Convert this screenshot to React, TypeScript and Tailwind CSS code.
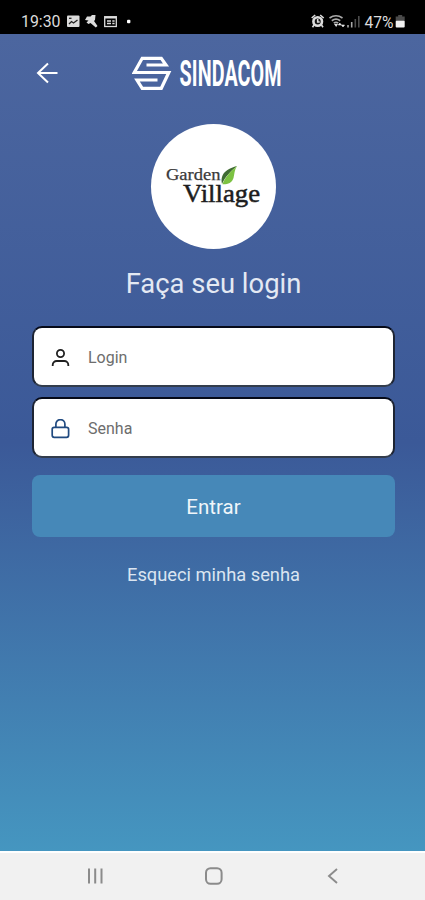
import type { ReactNode } from "react";

function StatusBar() {
  return (
    <div className="flex h-[34px] shrink-0 items-center bg-black pl-[21px] pr-[19px] pt-[9px] text-[#dcdcdc]">
      <svg className="h-[20px] w-[115px]" viewBox="0 0 115 20">
        <text x="0" y="15" fontSize="16" textLength="39.500" lengthAdjust="spacingAndGlyphs" fill="currentColor">19:30</text>
        {/* gallery */}
        <rect x="46" y="3.500" width="12.500" height="11.500" rx="1" fill="currentColor" />
        <path d="M48 12l2.500-2.500 2 1.500 4-3" stroke="#222" strokeWidth="1.300" fill="none" />
        <path d="M48 6.300h2.500" stroke="#222" strokeWidth="1.300" />
        {/* wrench */}
        <path d="M64 8l2-3.500h3.500L71 3h3.500l-.5 5-1 1 3.500 5-1.700 1.500L69.500 11l-2 1-2-1.500 2-2z" fill="currentColor" />
        {/* news card */}
        <rect x="83.700" y="4.700" width="11.600" height="9.800" fill="none" stroke="currentColor" strokeWidth="1.300" />
        <path d="M84 5.700h11M86 9h4M86 11.500h4M91.300 9h2.300M91.300 11.500h2.300" stroke="currentColor" strokeWidth="1.500" />
        <rect x="106" y="7.800" width="3.400" height="3.400" rx="1" fill="#fff" />
      </svg>

      <svg className="ml-auto h-[20px] w-[95px]" viewBox="0 0 95 20">
        {/* alarm */}
        <circle cx="6.700" cy="9.500" r="4.300" fill="#111" stroke="currentColor" strokeWidth="2.600" />
        <path d="M.7 6l3.500-3M12.700 6l-3.500-3M3 13l-1.500 2.200M10.500 13l1.500 2.200M6.700 7v3h2" stroke="currentColor" strokeWidth="1.600" fill="none" />
        {/* wifi */}
        <path d="M18.500 6q6.500-4.500 13 0M20.800 8.700q4.200-3.200 8.400 0M22.800 11.200q2.200-1.800 4.400 0" stroke="#aaa" strokeWidth="1.700" fill="none" />
        <path d="M23 12h4l-1.800 3z" fill="#ddd" />
        <path d="M28.800 11l-1.500 2h3zM32 15l-1.500-2h3z" fill="#eee" stroke="#eee" strokeWidth=".6" />
        {/* signal */}
        <path d="M37 13v2.500M40.700 10v5.500" stroke="#aaa" strokeWidth="1.600" />
        <path d="M44.300 7v8.500M47.800 4v11.500" stroke="#4d4d4d" strokeWidth="1.600" />
        <text x="53.500" y="15.500" fontSize="16" textLength="29" lengthAdjust="spacingAndGlyphs" fill="currentColor">47%</text>
        {/* battery */}
        <path d="M87.200 3h4v1.500h2.500v5h-9v-5h2.500z" fill="#4a4a4a" />
        <rect x="84.700" y="8.700" width="9" height="6.800" rx="1" fill="#f1f1f1" />
      </svg>
    </div>
  );
}

function Brand() {
  return (
    <svg className="h-[50px] w-[160px]" viewBox="0 -6 160 50" fill="none">
      <path
        d="M14.500 11H34L29.300 4.300H10.200L2.300 18.500H36.800L29.300 34.300H10.200L5 26H25.500"
        stroke="#fff"
        strokeWidth="3.200"
      />
      <text
        x="0"
        y="0"
        transform="translate(47.500 32.300) scale(.580 1.080)"
        className="font-[Roboto,sans-serif] font-bold"
        fontSize="34"
        textLength="176"
        lengthAdjust="spacing"
        fill="#fff"
      >
        SINDACOM
      </text>
    </svg>
  );
}

function GardenLogo() {
  return (
    <div className="flex size-[125px] items-center justify-center rounded-full bg-white">
      <svg className="h-[50px] w-[100px] font-['Liberation_Serif',serif]" viewBox="0 0 100 50">
        <text x="2" y="18" fontSize="16.500" textLength="54.500" lengthAdjust="spacingAndGlyphs" fill="#3a3a3a" stroke="#3a3a3a" strokeWidth=".25">Garden</text>
        <text x="19" y="39.700" fontSize="25.500" textLength="77" lengthAdjust="spacingAndGlyphs" fill="#1d1d1d" stroke="#1d1d1d" strokeWidth=".5">Village</text>
        <path d="M73 4C66 6 59.500 9 58 15c-.7 2.500-.5 4.500 0 7C61 15 66 10 73 4z" fill="#3f6b32" />
        <path d="M73 4C66 10 61 15 58.500 22.300c5 .3 9.500-1.300 11-6.300 1-4 .8-8 3.500-12z" fill="#7cc242" />
      </svg>
    </div>
  );
}

interface FieldProps {
  type: string;
  placeholder: string;
  icon: ReactNode;
}

function Field({ type, placeholder, icon }: FieldProps) {
  return (
    <label className="flex h-[61px] items-center gap-[17px] rounded-[10px] border-2 border-t-[#060a18] border-x-[#1d2433] border-b-[#333d4c] bg-white pl-[17px] pt-[2px]">
      {icon}
      <input
        type={type}
        placeholder={placeholder}
        className="w-[280px] bg-transparent text-[16px] text-gray-700 outline-none placeholder:text-[#6d6d6d]"
      />
    </label>
  );
}

const userIcon = (
  <svg className="size-[20px]" viewBox="0 0 20 20" fill="none" stroke="#202020" strokeWidth="1.800">
    <circle cx="9.500" cy="5.500" r="3.600" />
    <path d="M1.700 18v-1a4 4 0 0 1 4-4h7.600a4 4 0 0 1 4 4v1" />
  </svg>
);

const lockIcon = (
  <svg className="size-[20px]" viewBox="0 0 20 20" fill="none" stroke="#204a80" strokeWidth="1.700">
    <rect x="1.200" y="8.300" width="16.400" height="10" rx="2" />
    <path d="M4.900 8.300V5.100a4.500 4.500 0 0 1 9 0v3.200" />
  </svg>
);

function NavBar() {
  return (
    <div className="flex h-[49px] shrink-0 items-center justify-between border-t-2 border-white bg-[#f1f1f1] pl-[86px] pr-[83px] pb-[1px] text-[#8b8b8b]">
      <svg className="size-[18px]" viewBox="0 0 18 18" stroke="currentColor" strokeWidth="2">
        <path d="M3 1.500v15M9.200 1.500v15M15.500 1.500v15" />
      </svg>
      <svg className="size-[18px]" viewBox="0 0 18 18" fill="none" stroke="currentColor" strokeWidth="2">
        <rect x="1" y="1.200" width="15.600" height="15.600" rx="4.500" />
      </svg>
      <svg className="size-[18px]" viewBox="0 0 18 18" fill="none" stroke="currentColor" strokeWidth="1.900">
        <path d="M13 2L5 9l8 7" />
      </svg>
    </div>
  );
}

export default function App() {
  return (
    <div className="flex h-[900px] w-[425px] flex-col overflow-hidden font-[Roboto,sans-serif]">
      <StatusBar />

      <main className="flex flex-1 flex-col bg-linear-to-b from-[#4c669f] via-[#3b5998] to-[#4596c0] pl-[32px] pr-[30px]">
        <header className="flex h-[78px] items-center">
          <button aria-label="Voltar" className="ml-[4px] w-[22px]">
            <svg className="h-[22px] w-[22px]" viewBox="0 0 22 22" fill="none" stroke="#fff" strokeWidth="2">
              <path d="M21.500 11H2M12 1.500L2 11l10 9.500" />
            </svg>
          </button>
          <div className="ml-[74px]">
            <Brand />
          </div>
        </header>

        <div className="mt-[12px] flex justify-center">
          <GardenLogo />
        </div>

        <h1 className="mt-[17px] text-center text-[27.4px] leading-[36px] text-[#e4e9f3]">Faça seu login</h1>

        <form className="mt-[24px] flex flex-col gap-[10px]" onSubmit={e => e.preventDefault()}>
          <Field type="text" placeholder="Login" icon={userIcon} />
          <Field type="password" placeholder="Senha" icon={lockIcon} />
          <button className="mt-[7px] h-[62px] rounded-[8px] bg-[#4688b8] pt-[2px] text-[20.5px] text-[#f0f6fa]">
            Entrar
          </button>
        </form>

        <a href="#" className="mt-[25px] text-center text-[18.3px] leading-[26px] text-[#dbe5f1]">
          Esqueci minha senha
        </a>
      </main>

      <NavBar />
    </div>
  );
}
